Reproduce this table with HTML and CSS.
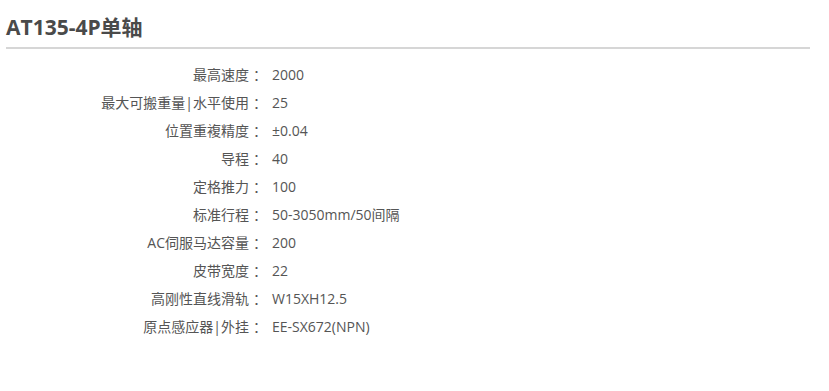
FILE: index.html
```html
<!DOCTYPE html>
<html lang="zh-CN">
<head>
<meta charset="utf-8">
<title>AT135-4P单轴</title>
<link rel="stylesheet" href="styles.css">
</head>
<body>
<div class="page">
  <h1 class="title">AT135-4P单轴</h1>
  <dl class="specs">
    <dt>最高速度<span class="colon">：</span></dt><dd>2000</dd>
    <dt>最大可搬重量|水平使用<span class="colon">：</span></dt><dd>25</dd>
    <dt>位置重複精度<span class="colon">：</span></dt><dd>±0.04</dd>
    <dt>导程<span class="colon">：</span></dt><dd>40</dd>
    <dt>定格推力<span class="colon">：</span></dt><dd>100</dd>
    <dt>标准行程<span class="colon">：</span></dt><dd>50-3050mm/50间隔</dd>
    <dt>AC伺服马达容量<span class="colon">：</span></dt><dd>200</dd>
    <dt>皮带宽度<span class="colon">：</span></dt><dd>22</dd>
    <dt>高刚性直线滑轨<span class="colon">：</span></dt><dd>W15XH12.5</dd>
    <dt>原点感应器|外挂<span class="colon">：</span></dt><dd>EE-SX672(NPN)</dd>
  </dl>
</div>
</body>
</html>
```
FILE: styles.css
```css
html, body {
  margin: 0;
  padding: 0;
  background: #fff;
}
body {
  font-family: "Open Sans", "Noto Sans CJK SC", sans-serif;
  color: #555;
}
.page {
  width: 804px;
  padding: 12px 0 0 6px;
}
.title {
  margin: 0;
  font-size: 21px;
  font-weight: bold;
  color: #4a4a4a;
  line-height: 30px;
  padding-bottom: 5px;
  border-bottom: 2px solid #d6d6d6;
}
.specs {
  margin: 12px 0 0 0;
  display: grid;
  grid-template-columns: 261px 1fr;
  column-gap: 5px;
  font-size: 14px;
  line-height: 28px;
}
.specs dt {
  text-align: right;
}
.specs .colon {
  margin-left: 4px;
}
.specs dd {
  margin: 0;
}
```
